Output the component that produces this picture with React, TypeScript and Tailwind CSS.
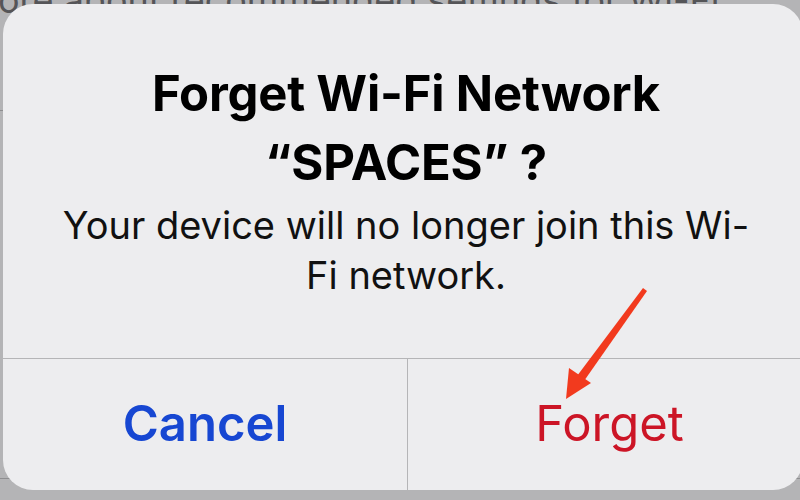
export default function App() {
  return (
    <div className="relative w-[800px] h-[500px] overflow-hidden bg-[#b4b4b6] font-['Inter',sans-serif]">
      {/* settings list behind the alert */}
      <div className="flex flex-col">
        <p className="-mt-[22px] -ml-[2px] text-[36px] leading-[44px] text-[#555558] whitespace-nowrap">
          ore about recommended settings for Wi-Fi
        </p>
        <div className="mt-[88px] h-px w-full bg-[#8e8e90]" />
        <div className="mt-[367px] h-px w-full bg-[#8e8e90]" />
      </div>

      {/* alert */}
      <div className="absolute left-[3px] top-[4px] w-[800px] h-[486px] rounded-[30px] bg-[#ededef] flex flex-col">
        <div className="h-[354px] flex flex-col items-center pt-[55px] pl-[6px]">
          <h1 className="text-center text-[49px] leading-[69px] font-bold tracking-[-0.2px] text-black">
            Forget Wi-Fi Network
            <br />
            “SPACES” ?
          </h1>
          <p className="mt-[3px] w-[760px] text-center text-[38px] leading-[50px] text-[#111]">
            Your device will no longer join this Wi-
            <br />
            Fi network.
          </p>
        </div>
        <div className="flex-1 flex border-t border-[#b5b5b7]">
          <button className="w-[404px] flex items-center justify-center pb-[1px] text-[49px] font-semibold text-[#1747d2]">
            Cancel
          </button>
          <div className="w-px bg-[#b5b5b7]" />
          <button className="flex-1 flex items-center justify-center pb-[1px] pl-[8px] text-[49px] text-[#cc1526]">
            Forget
          </button>
        </div>
      </div>

      {/* annotation arrow */}
      <svg className="absolute left-0 top-0" width="800" height="500" viewBox="0 0 800 500">
        <polygon points="643,288 647,291 584,381 577,376" fill="#f23a1e" />
        <polygon points="566,399 569,368 591,383" fill="#f23a1e" />
      </svg>
    </div>
  );
}
